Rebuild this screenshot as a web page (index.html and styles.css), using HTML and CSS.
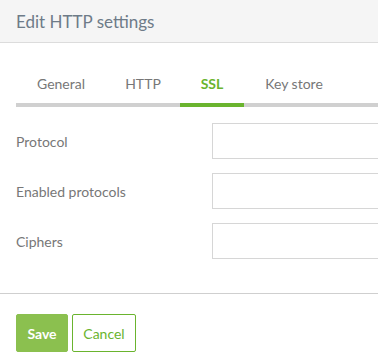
FILE: index.html
```html
<!DOCTYPE html>
<html lang="en">
<head>
    <meta charset="UTF-8">
    <title>Edit HTTP settings</title>
    <link rel="stylesheet" href="styles.css">
</head>
<body>
    <div class="dialog">
        <div class="dialog-header">
            <h2>Edit HTTP settings</h2>
        </div>

        <div class="dialog-body">
            <ul class="tabs">
                <li class="tab tab-general">General</li>
                <li class="tab tab-http">HTTP</li>
                <li class="tab tab-ssl active">SSL</li>
                <li class="tab tab-keystore">Key store</li>
            </ul>

            <div class="form">
                <div class="form-row">
                    <label for="protocol">Protocol</label>
                    <input type="text" id="protocol" class="form-control">
                </div>
                <div class="form-row">
                    <label for="enabled-protocols">Enabled protocols</label>
                    <input type="text" id="enabled-protocols" class="form-control">
                </div>
                <div class="form-row">
                    <label for="ciphers">Ciphers</label>
                    <input type="text" id="ciphers" class="form-control">
                </div>
            </div>
        </div>

        <div class="dialog-footer">
            <button class="btn btn-primary">Save</button>
            <button class="btn btn-outline">Cancel</button>
        </div>
    </div>
</body>
</html>
```

FILE: styles.css
```css
* { margin: 0; padding: 0; box-sizing: border-box; }
body { font-family: Lato, "Open Sans", sans-serif; background: white; color: #777; overflow: hidden; }
.dialog { width: 378px; }
.dialog-header { height: 43px; background: #f5f5f5; border-bottom: 1px solid #dcdcdc; padding: 0 16px; display: flex; align-items: center; }
.dialog-header h2 { font-size: 17px; font-weight: 400; color: #6e7b88; }
.dialog-body { padding: 21px 0 0 16px; }
.tabs { list-style: none; display: flex; border-bottom: 4px solid #d0d0d0; height: 43px; }
.tab { font-size: 14px; line-height: 39px; text-align: center; color: #777; cursor: pointer; }
.tab-general { width: 90px; }
.tab-http { width: 74px; }
.tab-ssl { width: 64px; }
.tab-keystore { width: 100px; }
.tab.active { color: #6ab42e; font-weight: 700; border-bottom: 4px solid #6ab42e; margin-bottom: -4px; }
.form { padding-top: 16px; display: flex; flex-direction: column; gap: 14px; }
.form-row { display: flex; align-items: center; height: 36px; }
.form-row label { flex: 0 0 196px; font-size: 14px; color: #777; }
.form-control { flex: 1; min-width: 0; height: 36px; border: 1px solid #d6d6d6; border-right: none; font-size: 14px; padding: 0 10px; }
.form-control:focus { outline: none; border-color: #6ab42e; }
.dialog-footer { margin-top: 34px; border-top: 1px solid #cfcfcf; padding: 20px 16px; display: flex; gap: 4px; }
.btn { height: 38px; border-radius: 2px; font-family: inherit; font-size: 14px; cursor: pointer; }
.btn-primary { width: 52px; background: #8bc04f; color: white; border: 1px solid #8bc04f; font-weight: 700; }
.btn-outline { width: 64px; background: white; color: #6ab42e; border: 1px solid #6ab42e; }
```
